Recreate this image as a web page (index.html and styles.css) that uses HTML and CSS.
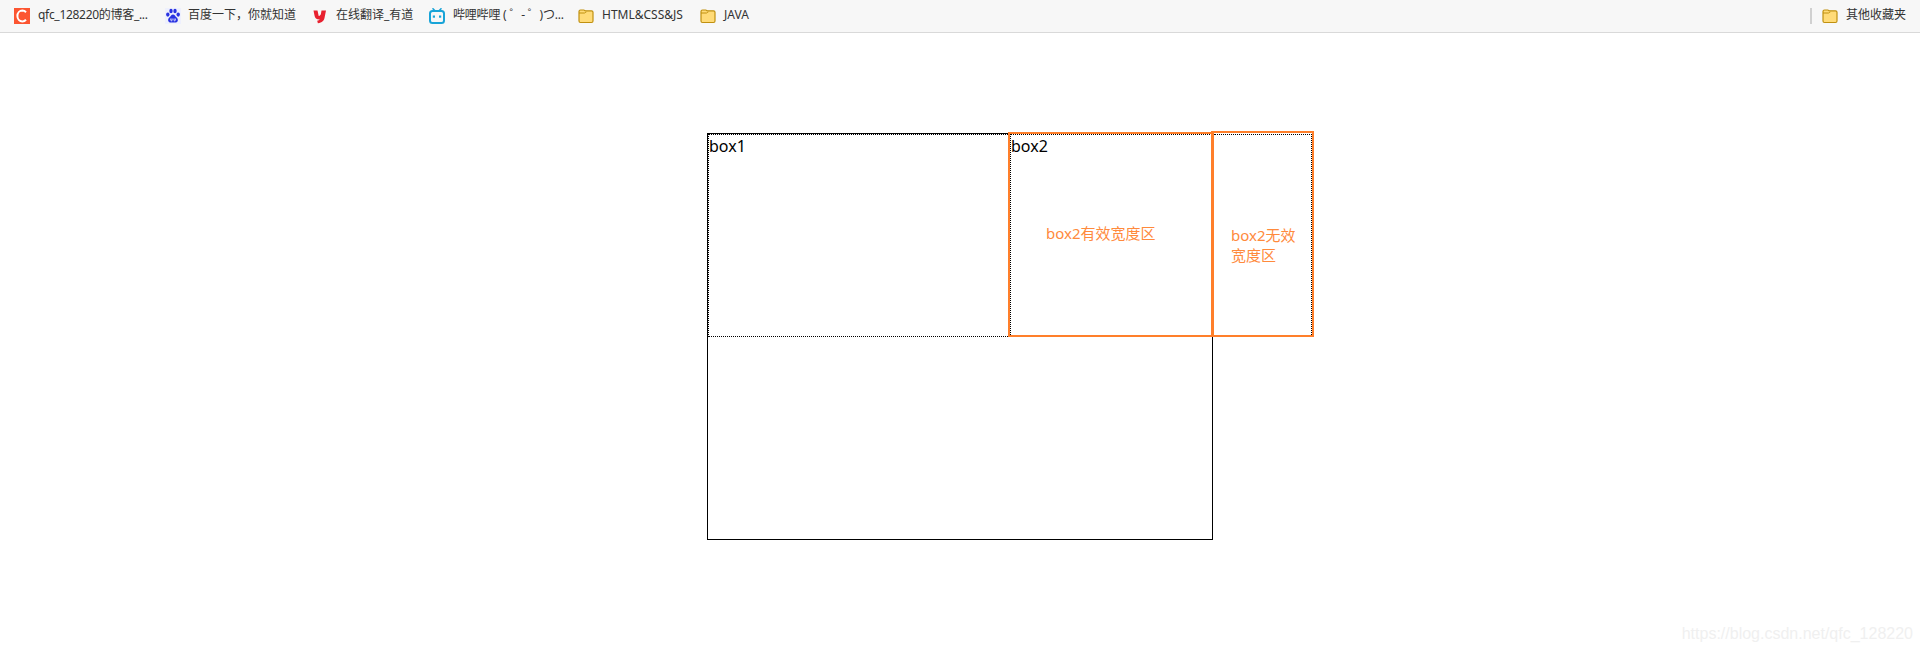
FILE: index.html
```html
<!DOCTYPE html>
<html lang="zh-CN">
<head>
<meta charset="utf-8">
<title>box2</title>
<link rel="stylesheet" href="styles.css">
</head>
<body>
<nav class="bookmarks">
  <a class="mark w-csdn"><svg class="ico" viewBox="0 0 16 16"><rect width="16" height="16" fill="#fc5531"/><path d="M12 4.200A5.200 5.200 0 0 0 8.400 2.600C5.500 2.600 3.400 5 3.400 8s2.100 5.400 5 5.400a5.200 5.200 0 0 0 3.600-1.600" fill="none" stroke="#fff" stroke-width="2"/></svg><span>qfc_128220的博客_...</span></a>
  <a class="mark w-baidu"><svg class="ico" viewBox="0 0 16 16"><rect width="16" height="16" fill="#eef0fd"/><g fill="#2932e1"><ellipse cx="2.800" cy="6.600" rx="1.700" ry="2.100"/><ellipse cx="6" cy="3" rx="1.700" ry="2.200"/><ellipse cx="10" cy="3" rx="1.700" ry="2.200"/><ellipse cx="13.200" cy="6.600" rx="1.700" ry="2.100"/><path d="M8 6.500c-1.700 0-2.200 1.700-3.400 2.800C3.400 10.400 2.800 11.500 3.300 13c.5 1.400 2 1.700 3.200 1.500.9-.1 2.100-.1 3 0 1.200.2 2.700-.1 3.200-1.500.5-1.500-.1-2.600-1.300-3.700C10.200 8.200 9.700 6.500 8 6.500z"/></g><path d="M5.800 10.500v1.600c0 1 1.300 1 1.300 0v-1.600M9 10.500v1.600c0 1 1.300 1 1.300 0v-1.600" fill="none" stroke="#fff" stroke-width=".8"/></svg><span>百度一下，你就知道</span></a>
  <a class="mark w-youdao"><svg class="ico" viewBox="0 0 16 16"><path d="M1.500 2.500h4l1.200 5.500c1.500-.3 2.100-1.200 2.300-2.500l.5-3h4.500L12.700 9c-.5 3.500-2.600 5.800-6.800 6.300l-.7-2.600c1.200-.2 2.100-.6 2.700-1.300C4.500 11.500 3 10.300 2.500 7.500z" fill="#e8212f"/></svg><span>在线翻译_有道</span></a>
  <a class="mark w-bili"><svg class="ico" viewBox="0 0 16 16"><path d="M4 .8 6.200 3M12 .8 9.800 3" stroke="#18a4d8" stroke-width="1.600" stroke-linecap="round"/><rect x="1" y="3" width="14" height="12" rx="2.500" fill="none" stroke="#18a4d8" stroke-width="2"/><rect x="3.800" y="7.500" width="2.200" height="2.200" fill="#18a4d8"/><rect x="10" y="7.500" width="2.200" height="2.200" fill="#18a4d8"/></svg><span>哔哩哔哩 ( ゜- ゜)つ...</span></a>
  <a class="mark w-html"><svg class="ico" viewBox="0 0 16 16"><use href="#folder"/></svg><span>HTML&amp;CSS&amp;JS</span></a>
  <a class="mark"><svg class="ico" viewBox="0 0 16 16"><use href="#folder"/></svg><span>JAVA</span></a>
  <div class="others">
    <i class="divider"></i>
    <a class="mark"><svg class="ico" viewBox="0 0 16 16"><use href="#folder"/></svg><span>其他收藏夹</span></a>
  </div>
</nav>

<svg class="defs" width="0" height="0"><defs><g id="folder"><path d="M1 3.500A1.500 1.500 0 0 1 2.500 2h3.300c.8 0 1.100.8 1.900.8h5.800A1.500 1.500 0 0 1 15 4.300V13a1.500 1.500 0 0 1-1.500 1.500h-11A1.500 1.500 0 0 1 1 13z" fill="#ffdb78" stroke="#c0900f" stroke-width="1.200"/><path d="M1 5h5.500c.8 0 1-.9 1.800-.9" fill="none" stroke="#c0900f" stroke-width="1"/></g></defs></svg>

<main class="stage">
  <div class="outer"></div>
  <div class="dotted box1"><span class="name">box1</span></div>
  <div class="dotted box2"><span class="name">box2</span></div>
  <div class="dotted box3"></div>
  <div class="frame frame-valid"></div>
  <div class="frame frame-invalid"></div>
  <p class="note note-valid">box2有效宽度区</p>
  <p class="note note-invalid">box2无效<br>宽度区</p>
  <p class="watermark">https://blog.csdn.net/qfc_128220</p>
</main>
</body>
</html>
```
FILE: styles.css
```css
html, body { margin: 0; padding: 0; background: #fff; }
body {
  width: 1920px;
  height: 651px;
  overflow: hidden;
  font-family: "Noto Sans", "Noto Sans CJK SC", sans-serif;
}
.defs { position: absolute; }

.bookmarks {
  box-sizing: border-box;
  height: 33px;
  display: flex;
  align-items: center;
  padding: 0 14px;
  background: #f7f7f7;
  border-bottom: 1px solid #d9d9d9;
}
.mark {
  display: flex;
  align-items: center;
  gap: 8px;
  margin-right: 17px;
  font-size: 12px;
  line-height: 16px;
  color: #333;
  white-space: nowrap;
}
.mark span { display: block; padding-bottom: 2px; }
.w-csdn span { width: 110px; letter-spacing: -0.3px; }
.w-baidu { gap: 7px; }
.w-baidu span { width: 107px; }
.w-youdao span { width: 76px; }
.w-bili span { width: 108px; letter-spacing: -0.2px; }
.w-html span { width: 81px; }
.ico { width: 16px; height: 16px; flex: none; }
.others {
  margin-left: auto;
  display: flex;
  align-items: center;
  gap: 10px;
}
.others .mark { margin-right: 0; }
.others .mark span { width: 60px; }
.divider { width: 2px; height: 16px; margin-right: 0; background: #d0d0d0; }

.stage { position: absolute; inset: 0; }
.outer, .dotted, .frame { position: absolute; box-sizing: border-box; }
.outer {
  left: 707px; top: 133px; width: 506px; height: 407px;
  border: 1px solid #000;
}
.dotted { border: 1px dotted #000; height: 203px; top: 134px; }
.box1 { left: 708px; width: 302px; }
.box2 { left: 1010px; width: 202px; }
.box3 { left: 1214px; width: 98px; border-left: 0; }
.name {
  display: block;
  font-size: 16px;
  line-height: 22px;
  color: #000;
}
.frame { border: 2px solid #ff7f2a; }
.frame-valid { left: 1008px; top: 132px; width: 205px; height: 205px; }
.frame-invalid { left: 1211px; top: 131px; width: 103px; height: 206px; border-left-width: 3px; }
.note {
  position: absolute;
  margin: 0;
  font-size: 15px;
  line-height: 20px;
  color: #ff8a3c;
}
.note-valid { left: 1046px; top: 223px; }
.note-invalid { left: 1231px; top: 225px; }
.watermark {
  position: absolute;
  margin: 0;
  right: 7px;
  top: 624px;
  font-family: "Liberation Sans", sans-serif;
  font-size: 16px;
  line-height: 20px;
  color: #f0f0f0;
}
```
